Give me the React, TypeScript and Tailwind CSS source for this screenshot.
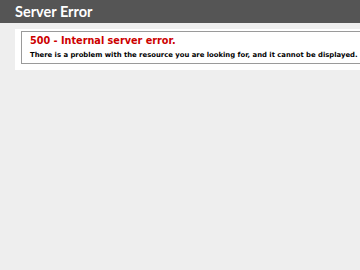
export default function App() {
  return (
    <div className="min-h-[270px] bg-[#eeeeee] font-['DejaVu_Sans',Verdana,sans-serif] overflow-hidden">
      <div className="bg-[#555555] h-[23px] pl-[15px] pt-[1px] flex items-center text-white font-bold text-[14.5px] leading-none font-['Lato',sans-serif]">
        Server Error
      </div>
      <div className="ml-[15px] mt-[6px] bg-white h-[41px] pl-[6px] pt-[2px]">
        <div className="border border-r-0 border-[#9a9a9a] h-[33px] pl-[8px] pt-[2px]">
          <div className="text-[#cc0000] font-bold text-[9.7px] leading-[13px]">500 - Internal server error.</div>
          <div className="text-black font-bold text-[6.85px] leading-[10px] mt-[3px] whitespace-nowrap">
            There is a problem with the resource you are looking for, and it cannot be displayed.
          </div>
        </div>
      </div>
    </div>
  );
}
